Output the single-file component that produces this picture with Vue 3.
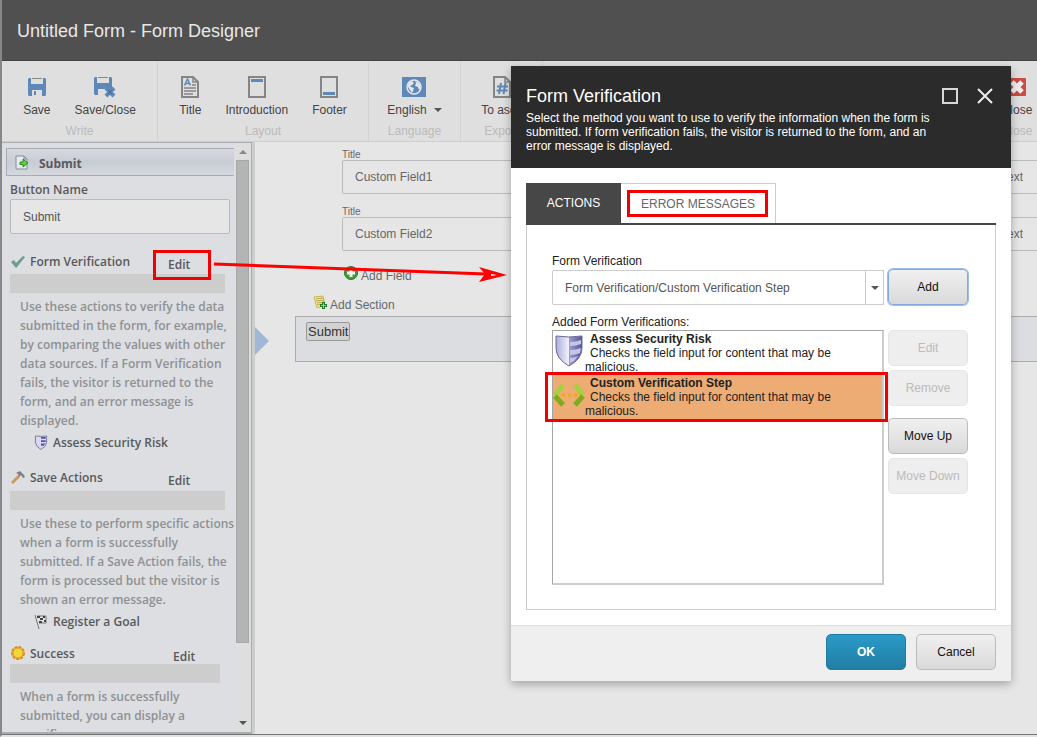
<script setup>
import { ref } from 'vue'

const buttonName = ref('Submit')
const fields = ref([
  { id: 'field1', name: 'Custom Field1', type: 'Text' },
  { id: 'field2', name: 'Custom Field2', type: 'Text' }
])
const steps = [
  { title: 'Assess Security Risk', icon: 'shield' },
  { title: 'Custom Verification Step', icon: 'code', selected: true }
]
const sections = [
  {
    key: 'verify',
    title: 'Form Verification',
    text: 'Use these actions to verify the data\nsubmitted in the form, for example,\nby comparing the values with other\ndata sources. If a Form Verification\nfails, the visitor is returned to the\nform, and an error message is\ndisplayed.',
    item: 'Assess Security Risk'
  },
  {
    key: 'save',
    title: 'Save Actions',
    text: 'Use these to perform specific actions\nwhen a form is successfully\nsubmitted. If a Save Action fails, the\nform is processed but the visitor is\nshown an error message.',
    item: 'Register a Goal'
  },
  {
    key: 'success',
    title: 'Success',
    text: 'When a form is successfully\nsubmitted, you can display a\nspecific message.'
  }
]
</script>

<template>
  <div class="app">
    <header class="titlebar"><h1>Untitled Form - Form Designer</h1></header>

    <nav class="ribbon">
      <div class="group write">
        <div class="tools">
          <button class="tool">
            <svg width="18" height="20" viewBox="0 0 18 20"><path d="M0 2l1-1h2v6h12V1h2l1 1v16l-1 1h-3v-6H4v6H1l-1-1z" fill="#5d88b8" /><path d="M4 1h10v1H4z" fill="#888" /><path d="M6 14h2v4H6z" fill="#5d88b8" /></svg>
            <span>Save</span>
          </button>
          <button class="tool">
            <svg width="22" height="22" viewBox="0 0 22 22"><path d="M0 2l1-1h2v6h12V1h2l1 1v11H4v6H1l-1-1z" fill="#5d88b8" /><path d="M4 1h10v1H4z" fill="#888" /><path d="M12 12l8 8M20 12l-8 8" stroke="#5d88b8" stroke-width="4" /><path d="M14 14l4 4M18 14l-4 4" stroke="#42688f" stroke-width="1" /></svg>
            <span>Save/Close</span>
          </button>
        </div>
        <div class="caption">Write</div>
      </div>
      <div class="group layout">
        <div class="tools">
          <button class="tool">
            <svg width="18" height="22" viewBox="0 0 18 22" fill="none" stroke="#858585"><path d="M1 1h11l5 5v15H1z" stroke-width="2" /><path d="M12 1v5h5M11 9h4M3 12h12M3 15h12M3 18h9" stroke-width="1.500" /><path d="M3.500 9.500L6.500 3l3 6.500M4.500 7.500h4" stroke="#5d88b8" stroke-width="1.500" /></svg>
            <span>Title</span>
          </button>
          <button class="tool">
            <svg width="18" height="22" viewBox="0 0 18 22"><path d="M1 1h16v20H1z" fill="none" stroke="#858585" stroke-width="2" /><path d="M3 3h12v3H3z" fill="#5d88b8" /></svg>
            <span>Introduction</span>
          </button>
          <button class="tool">
            <svg width="18" height="22" viewBox="0 0 18 22"><path d="M1 1h16v20H1z" fill="none" stroke="#858585" stroke-width="2" /><path d="M3 16h12v3H3z" fill="#5d88b8" /></svg>
            <span>Footer</span>
          </button>
        </div>
        <div class="caption">Layout</div>
      </div>
      <div class="group language">
        <div class="tools">
          <button class="tool">
            <svg width="24" height="20" viewBox="0 0 24 20"><path d="M0 0h24v20H0z" fill="#5d88b8" /><circle cx="12" cy="10" r="7" fill="none" stroke="#e3e6ea" stroke-width="1.500" /><path d="M6 6l4-2 2 2-2 2-2 1 1 1 3 1-1 3-1 2-2-3-2-3zM13 4l4 2 2 4-2 3-1-3-3-1 1-3z" fill="#e3e6ea" /></svg>
            <span class="with-arrow">English<i class="down"></i></span>
          </button>
        </div>
        <div class="caption">Language</div>
      </div>
      <div class="group export">
        <div class="tools">
          <button class="tool">
            <svg width="18" height="22" viewBox="0 0 18 22" fill="none" stroke="#858585"><path d="M1 1h11l5 5v15H1z" stroke-width="2" /><path d="M12 1v5h5" stroke-width="1.500" /><path d="M8 7L6 18M12.500 7l-2 11M4 10.500h11M3.500 14.500h11" stroke="#5d88b8" stroke-width="2" /></svg>
            <span>To ascx</span>
          </button>
        </div>
        <div class="caption">Export</div>
      </div>
      <div class="group close">
        <div class="tools">
          <button class="tool">
            <svg width="18" height="18" viewBox="0 0 18 18"><rect width="18" height="18" rx="1" fill="#cb4b45" /><path d="M4 4l10 10M14 4L4 14" stroke="#eee" stroke-width="5" /></svg>
            <span>Close</span>
          </button>
        </div>
        <div class="caption">Close</div>
      </div>
    </nav>

    <div class="work">
      <aside class="side">
        <div class="side-content">
          <div class="side-title">
            <svg width="14" height="16" viewBox="0 0 14 16"><path d="M1 1h8l3 3v10H1z" fill="#e5eaee" stroke="#858d98" /><path d="M9 1v3h3" fill="none" stroke="#858d98" /><path d="M5 7h3V4l5 4-5 4V9.500H5z" fill="#62cf3d" stroke="#278b20" /></svg>
            <h2>Submit</h2>
          </div>
          <label class="name-label" for="button-name">Button Name</label>
          <input id="button-name" v-model="buttonName" class="name-input" />
          <section v-for="s in sections" :key="s.key" :class="s.key">
            <div class="section-head">
              <svg v-if="s.key === 'verify'" width="14" height="14" viewBox="0 0 14 14"><path d="M0 8l3-2 2 3 7-7 2 1-8 10-1 1z" fill="#6d9d8e" /></svg>
              <svg v-else-if="s.key === 'save'" width="14" height="14" viewBox="0 0 14 14"><path d="M1 13l7-7" stroke="#d4965f" stroke-width="3" /><path d="M5 3l4-2 4 4 1 2-2 1-2-3-2 2-1-3z" fill="#7d8082" /></svg>
              <svg v-else width="14" height="14" viewBox="0 0 14 14"><circle cx="7" cy="7" r="6" fill="#f0ce39" stroke="#d88b28" stroke-width="2" stroke-dasharray="3 1" /><circle cx="7" cy="7" r="5" fill="#f0d837" stroke="#df9a2e" /></svg>
              <h3>{{ s.title }}</h3>
              <a href="#" class="edit">Edit</a>
            </div>
            <div class="bar"></div>
            <p>{{ s.text }}</p>
            <div v-if="s.item" class="side-item">
              <svg v-if="s.key === 'verify'" width="14" height="15" viewBox="0 0 26 32"><path d="M1 2q12 2 24 0v13q0 9-12 16Q1 24 1 15z" fill="#d7d8f1" stroke="#7777a0" stroke-width="2" /><path d="M13 4h10v4H13zm0 7h10v4H13zm0 7h9l-3 5h-6z" fill="#5655a3" /></svg>
              <svg v-else width="14" height="15" viewBox="0 0 14 15"><path d="M1 1l4 14M3 2h9v7H5" fill="#e4e4e4" stroke="#777" /><path d="M3 2h3v2H3zm6 0h2v2H9zM6 4h3v2H6zm4 2h2v2h-2zM5 7h3v2H5z" fill="#444" /></svg>
              <span>{{ s.item }}</span>
            </div>
          </section>
        </div>
        <div class="scroll"><i class="up"></i><div class="thumb"></div><i class="down"></i></div>
      </aside>
      <main class="canvas">
        <div v-for="f in fields" :key="f.id" class="field">
          <div class="field-name">
            <label :for="f.id">Title</label>
            <input :id="f.id" v-model="f.name" />
          </div>
          <input v-model="f.type" class="field-type" aria-label="Type" />
        </div>
        <button class="add add-field">
          <svg width="14" height="14" viewBox="0 0 14 14"><circle cx="7" cy="7" r="6.500" fill="#3f9e3a" stroke="#2c7430" /><path d="M7 3v8M3 7h8" stroke="#f1f5f0" stroke-width="3" /></svg>
          <span>Add Field</span>
        </button>
        <button class="add add-section">
          <svg width="14" height="15" viewBox="0 0 14 15"><path d="M1 2l9-1 2 9-8 3z" fill="#eee6a0" stroke="#c5b653" /><path d="M3 4l7-1M3 6l8-1M4 8l7-1M4 10l6-1" stroke="#b9a94c" /><path d="M10.500 7v7M7 10.500h7" stroke="#237b27" stroke-width="3" /><path d="M10.500 8v5M8 10.500h5" stroke="#8bd775" stroke-width="1" /></svg>
          <span>Add Section</span>
        </button>
        <div class="submit-row"><button>Submit</button></div>
        <i class="marker"></i>
      </main>
    </div>

    <div class="dialog" role="dialog" aria-labelledby="dialog-title">
      <header>
        <div class="dialog-text">
          <h2 id="dialog-title">Form Verification</h2>
          <p>Select the method you want to use to verify the information when the form is submitted. If form verification fails, the visitor is returned to the form, and an error message is displayed.</p>
        </div>
        <button class="window-button" aria-label="Maximize"><svg width="16" height="16" viewBox="0 0 16 16"><path d="M1 1h14v14H1z" fill="none" stroke="#d8d8d8" stroke-width="2" /></svg></button>
        <button class="window-button" aria-label="Close"><svg width="16" height="16" viewBox="0 0 16 16"><path d="M1 1l14 14M15 1L1 15" stroke="#eee" stroke-width="2" /></svg></button>
      </header>
      <div class="dialog-body">
        <div class="tabs" role="tablist">
          <button role="tab" class="active">ACTIONS</button>
          <button role="tab" class="messages">ERROR MESSAGES<i class="mark"></i></button>
        </div>
        <div class="panel">
          <label for="step">Form Verification</label>
          <div class="pick-row">
            <div class="select-wrap">
              <select id="step"><option>Form Verification/Custom Verification Step</option></select>
              <span class="select-arrow"><i class="down"></i></span>
            </div>
            <button class="btn focus">Add</button>
          </div>
          <div class="list-label" id="list-label">Added Form Verifications:</div>
          <div class="list-row">
            <ul class="list" aria-labelledby="list-label">
              <li v-for="s in steps" :key="s.title" :class="{ selected: s.selected }">
                <svg v-if="s.icon === 'shield'" width="32" height="32" viewBox="0 0 32 32">
                  <defs><linearGradient id="shield-fill"><stop offset="0" stop-color="#a9abdc" /><stop offset=".5" stop-color="#f3f3fd" /><stop offset=".5" stop-color="#9d9ed2" /><stop offset="1" stop-color="#56569a" /></linearGradient></defs>
                  <path d="M3 1q13 2 26 0v12q0 11-13 18Q3 24 3 13z" fill="url(#shield-fill)" stroke="#6b6b91" /><path d="M17 7q6 0 11-2v4q-5 2-11 2zm0 8q6 0 11-2l-1 5q-4 2-10 2zm0 8q5 0 8-2l-4 5-4 2z" fill="#c4c5e7" />
                </svg>
                <svg v-else width="32" height="32" viewBox="0 0 32 32" fill="none" stroke-width="5"><path d="M10 6L2 16M22 6l8 10" stroke="#a6d13c" /><path d="M2 17l8 9M30 17l-8 9" stroke="#7eac1d" /><path d="M9 16h3M15 16h3M21 16h3" stroke="#f2a81a" stroke-width="3" /></svg>
                <div>
                  <strong>{{ s.title }}</strong>
                  <p>Checks the field input for content that may be malicious.</p>
                </div>
                <i v-if="s.selected" class="mark"></i>
              </li>
            </ul>
            <div class="side-buttons">
              <button class="btn" disabled>Edit</button>
              <button class="btn" disabled>Remove</button>
              <button class="btn move-up">Move Up</button>
              <button class="btn" disabled>Move Down</button>
            </div>
          </div>
        </div>
      </div>
      <footer>
        <button class="btn primary">OK</button>
        <button class="btn">Cancel</button>
      </footer>
    </div>

    <svg class="arrow" width="296" height="24" viewBox="0 0 296 24"><path d="M0 3l272 10" stroke="#f00" stroke-width="3" /><path d="M265 6l28 8-28 7 6-8z" fill="#f00" /><path d="M277 13l6 1-6 1z" fill="#fff" /></svg>
  </div>
</template>

<style>
body { margin: 0; }
</style>

<style scoped>
*, *::after { box-sizing: border-box; }
.app {
  position: relative;
  display: flex;
  flex-direction: column;
  height: 100vh;
  overflow: hidden;
  border-left: 2px solid #858789;
  border-bottom: 2px solid #e2e2e2;
  background: #e6e6e6;
  color: #444;
  font: 12px/14px "Liberation Sans", Arial, sans-serif;
}
h1, h2, h3, p, ul { margin: 0; padding: 0; }
button, input, select { font: inherit; color: inherit; margin: 0; }
button { padding: 0; border: 0; background: none; }
svg { flex: none; }
.titlebar {
  flex: none;
  padding: 21px 15px 18px;
  border-bottom: 1px solid #454145;
  background: #505050;
}
h1 { font-size: 18px; line-height: 21px; font-weight: 400; color: #e8e8e8; }
.up, .down { border: 4px solid transparent; width: 0; height: 0; }
.up { border-top: 0; border-bottom-color: #85878a; }
.down { border-bottom: 0; border-top-color: #555; }

.ribbon { flex: none; display: flex; height: 81px; background: #dfdfdf; border-bottom: 1px solid #cfcfcf; }
.group { display: flex; flex-direction: column; align-items: center; border-right: 1px solid #d2d2d2; }
.write { width: 156px; }
.layout { width: 211px; }
.language { width: 92px; }
.export { width: 82px; }
.close { width: 40px; margin-left: auto; border: 0; }
.tools { display: flex; gap: 24px; }
.tool { display: flex; flex-direction: column; align-items: center; padding-top: 15px; height: 63px; white-space: nowrap; }
.tool svg { height: 22px; }
.tool span { margin-top: 5px; }
.with-arrow { display: flex; align-items: center; gap: 7px; }
.caption { color: #bbb; }

.work { flex: 1; min-height: 0; display: flex; border-bottom: 1px solid #737573; }
.side {
  flex: none;
  display: flex;
  width: 250px;
  border: 1px solid #a9adb2;
  border-left: 0;
  border-bottom-width: 2px;
  background: #dcdee1;
  color: #58595b;
  font: 600 12px/19px "Open Sans", "Noto Sans", sans-serif;
}
.side-content { flex: 1; overflow: hidden; padding: 5px 2px 0 4px; }
.side-title {
  display: flex;
  align-items: center;
  gap: 10px;
  height: 28px;
  padding: 2px 0 0 8px;
  border: 1px solid #a7abb5;
  border-right: 0;
  background: linear-gradient(#d6d9df, #c8ccd4 50%, #d5d8de);
}
.side h2, .side h3 { font-size: 12px; line-height: 19px; }
.side h3 { font-weight: 600; }
.name-label { display: block; margin: 4px 0 0 4px; }
.name-input {
  display: block;
  width: 220px;
  height: 35px;
  margin-left: 4px;
  padding: 0 12px;
  border: 1px solid #bbb;
  border-radius: 2px;
  background: #e6e6e6;
  font: 12px "Liberation Sans", Arial, sans-serif;
  color: #555;
}
.section-head { display: flex; align-items: center; height: 39px; padding: 11px 0 0 5px; }
.section-head svg { margin-right: 5px; }
.section-head h3 { width: 138px; }
.verify .section-head { position: relative; height: 40px; padding-top: 14px; }
.verify .section-head::after { content: ""; position: absolute; left: 147px; top: 16px; width: 58px; height: 30px; border: 3px solid #f00000; }
.success .section-head { height: 33px; }
.success .section-head h3 { width: 143px; }
.edit { margin-top: 6px; color: inherit; text-decoration: none; }
.bar { width: 215px; height: 19px; margin-left: 4px; background: #cdcdcd; }
.success .bar { width: 210px; }
.side p { margin: 4px 0 0 14px; color: #8f9194; white-space: pre; }
.side-item { display: flex; align-items: center; gap: 5px; margin: 3px 0 0 28px; }
.scroll {
  flex: none;
  display: flex;
  flex-direction: column;
  align-items: center;
  width: 13px;
  margin-right: 2px;
  padding: 7px 0;
  background: #dedede;
}
.thumb { width: 13px; height: 84%; margin: 6px 0 auto; background: #b3b4b4; border: 1px solid #a8a8a8; }

.canvas {
  position: relative;
  flex: 1;
  min-width: 0;
  padding-top: 7px;
  border-left: 3px solid #cccecd;
  color: #666;
}
.field { display: flex; gap: 12px; align-items: flex-end; height: 45px; margin: 0 0 12px 87px; }
.field-name { flex: 1; }
.field label { display: block; font-size: 10px; line-height: 11px; }
.field input { display: block; width: 100%; height: 34px; padding: 0 12px; border: 1px solid #bbb; border-radius: 2px; background: transparent; }
.field .field-type { width: 280px; border-right: 0; border-radius: 0; text-align: right; padding-right: 14px; }
.add { display: flex; align-items: center; gap: 3px; height: 20px; }
.add span { padding-top: 5px; }
.add-field { margin: 4px 0 0 89px; }
.add-section { margin: 9px 0 0 58px; }
.submit-row { margin: 4px 0 0 40px; height: 46px; padding: 5px 10px; border: 1px solid #aaacae; border-right: 0; background: #dbdde0; }
.submit-row button { height: 19px; padding: 0 1px; border: 1px solid #999; border-radius: 2px; background: #d2d2d2; color: #333; font-size: 13px; }
.marker { position: absolute; left: 0; top: 185px; border: 14px solid transparent; border-left-color: #a0b7d6; border-right: 0; }

.dialog {
  position: absolute;
  top: 66px;
  right: 26px;
  width: 500px;
  border-radius: 2px;
  background: #fff;
  color: #222;
  box-shadow: 0 3px 10px rgba(0, 0, 0, .3);
}
.dialog header { display: flex; align-items: flex-start; padding: 19px 18px 15px 15px; background: #2b2b2b; color: #fff; }
.dialog-text { flex: 1; }
.dialog h2 { font-size: 18px; line-height: 22px; font-weight: 400; }
.dialog-text p { margin-top: 4px; width: 410px; }
.window-button { height: 16px; margin-top: 3px; }
.window-button + .window-button { margin-left: 19px; }
.window-button svg { display: block; }
.dialog-body { padding: 15px; }
.tabs { display: flex; height: 42px; border-bottom: 2px solid #474747; }
.tabs button { position: relative; padding: 0 20px; border: 1px solid #ccc; border-width: 1px 1px 0 0; color: #666; }
.tabs .active { width: 95px; border: 0; background: #474747; color: #fff; }
.mark { position: absolute; border: 3px solid #f00000; pointer-events: none; }
.messages .mark { inset: 6px 7px 6px 6px; }
.panel { padding: 28px 27px 24px 25px; border: 1px solid #ccc; border-top: 0; }
.panel label { display: block; line-height: 16px; }
.pick-row, .list-row { display: flex; align-items: flex-start; gap: 4px; }
.select-wrap { position: relative; flex: 1; height: 35px; margin-top: 1px; }
select { appearance: none; width: 100%; height: 35px; padding: 0 12px; border: 1px solid #ccc; border-radius: 2px; background: #fff; color: #555; }
.select-arrow { position: absolute; inset: 0 0 0 auto; display: flex; align-items: center; justify-content: center; width: 19px; border: 1px solid #ccc; pointer-events: none; }
.btn { width: 80px; height: 36px; border: 1px solid #bbb; border-radius: 5px; background: linear-gradient(#f0f0f0, #d9d9d9); color: #111; }
.btn:disabled { border-color: #e4e4e4; background: #eee; color: #bbb; }
.btn.focus { border-color: #86a9dc; box-shadow: 0 0 0 1px #9dbdea; }
.btn.primary { border-color: #2079a0; background: linear-gradient(#2b9ac9, #217ea3); color: #fff; font-weight: bold; }
.list-label { margin-top: 9px; line-height: 16px; }
.list { flex: 1; height: 255px; list-style: none; border: 1px solid #a5a5a5; border-right: 2px solid #ccc; border-bottom: 2px solid #ccc; }
li { position: relative; display: flex; height: 44px; padding-top: 1px; }
li svg { margin-top: 3px; }
li strong, li p { display: block; text-indent: 5px; }
li.selected { background: #edac73; }
li .mark { inset: -3px -6px -3px -8px; }
.side-buttons { display: flex; flex-direction: column; gap: 4px; }
.move-up { margin-top: 8px; }
.dialog footer { display: flex; justify-content: flex-end; gap: 10px; padding: 8px 15px 11px; border-top: 1px solid #ddd; border-radius: 0 0 2px 2px; background: #efefef; }
.arrow { position: absolute; left: 212px; top: 261px; pointer-events: none; }
</style>
